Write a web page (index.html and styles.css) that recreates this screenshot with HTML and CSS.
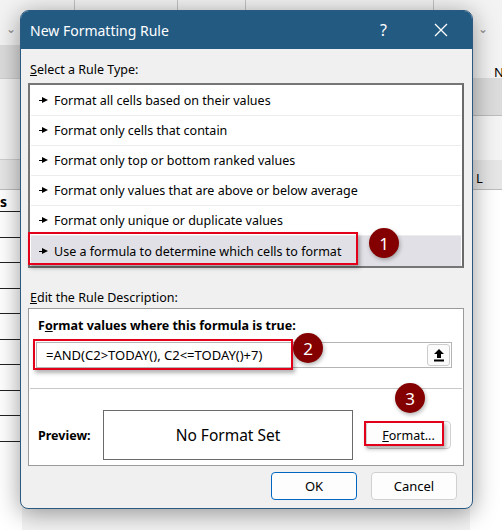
FILE: index.html
```html
<!DOCTYPE html>
<html lang="en">
	<head>
		<meta charset="UTF-8" />
		<title>New Formatting Rule</title>
		<link rel="stylesheet" href="styles.css">
	</head>

	<body>
		<div class="sheet">
			<div class="strip strip-left">
				<div class="band b-top"><span class="chev">&#8964;</span></div>
				<div class="band b-gray"></div>
				<div class="band b-light"></div>
				<div class="band b-head"></div>
				<div class="band b-title">s</div>
				<div class="cell"></div>
				<div class="cell"></div>
				<div class="cell"></div>
				<div class="cell"></div>
				<div class="cell"></div>
				<div class="cell"></div>
				<div class="cell"></div>
				<div class="cell"></div>
				<div class="cell"></div>
			</div>
			<div class="strip strip-mid">
				<div class="ribbon">
					<span class="grp g1"></span>
					<span class="grp g2"></span>
					<span class="grp g3"></span>
					<span class="grp g4"></span>
				</div>
			</div>
			<div class="strip strip-right">
				<div class="band b-top"><span class="chev">&#8964;</span></div>
				<div class="band b-name">N</div>
				<div class="band b-gray2"></div>
				<div class="band b-light2"></div>
				<div class="band b-head">L</div>
			</div>
		</div>

		<div class="dialog">
			<div class="titlebar">
				<span class="title">New Formatting Rule</span>
				<span class="tb-help">?</span>
				<span class="tb-close">
					<svg width="14" height="14" viewBox="0 0 14 14"><path d="M1 1L13 13M13 1L1 13" stroke="#fff" stroke-width="1.3" fill="none"/></svg>
				</span>
			</div>

			<div class="body">
				<div class="label"><u>S</u>elect a Rule Type:</div>
				<div class="list">
					<div class="item"><i class="arr"></i>Format all cells based on their values</div>
					<div class="item"><i class="arr"></i>Format only cells that contain</div>
					<div class="item"><i class="arr"></i>Format only top or bottom ranked values</div>
					<div class="item"><i class="arr"></i>Format only values that are above or below average</div>
					<div class="item"><i class="arr"></i>Format only unique or duplicate values</div>
					<div class="item selected"><i class="arr"></i>Use a formula to determine which cells to format</div>
				</div>

				<div class="label label2"><u>E</u>dit the Rule Description:</div>
				<div class="desc">
					<div class="desc-head">F<u>o</u>rmat values where this formula is true:</div>
					<div class="formula">
						<span class="formula-txt">=AND(C2&gt;TODAY(), C2&lt;=TODAY()+7)</span>
						<span class="pick">
							<svg width="12" height="14" viewBox="0 0 12 14"><path d="M6 1L11 6H8V10H4V6H1Z" fill="#000"/><rect x="1" y="11.5" width="10" height="2" fill="#000"/></svg>
						</span>
					</div>
					<div class="sep"></div>
					<div class="preview-row">
						<span class="preview-lbl">Preview:</span>
						<div class="preview">No Format Set</div>
						<button class="btn fmt"><u>F</u>ormat...</button>
					</div>
				</div>

				<div class="actions">
					<button class="btn ok">OK</button>
					<button class="btn cancel">Cancel</button>
				</div>
			</div>

			<div class="mark mark1"></div>
			<div class="badge badge1">1</div>
			<div class="mark mark2"></div>
			<div class="badge badge2">2</div>
			<div class="mark mark3"></div>
			<div class="badge badge3">3</div>
		</div>
	</body>
</html>
```

FILE: styles.css
```css
* {
	box-sizing: border-box;
	margin: 0;
	padding: 0;
}

body {
	width: 502px;
	height: 530px;
	overflow: hidden;
	position: relative;
	font-family: "Noto Sans", "Open Sans", sans-serif;
	font-size: 12px;
	color: #000;
	background: #fff;
}

/* spreadsheet behind the dialog */
.sheet {
	display: flex;
	height: 530px;
}

.strip {
	display: flex;
	flex-direction: column;
}

.strip-left {
	width: 22px;
}

.strip-mid {
	flex: 1;
	background: #f3f3f3;
}

.strip-right {
	width: 32px;
}

.ribbon {
	display: flex;
	height: 10px;
}

.grp {
	height: 10px;
	border-right: 1px solid #c4c4c4;
}

.g1 {
	width: 53px;
}

.g2 {
	width: 103px;
}

.g3 {
	width: 68px;
}

.g4 {
	width: 188px;
}

.band {
	position: relative;
}

.b-top {
	height: 45px;
	background: #f3f3f3;
}

.chev {
	display: block;
	color: #8a8a8a;
	font-size: 12px;
	margin-top: 20px;
	padding-left: 6px;
}

.strip-right .chev {
	padding-left: 8px;
}

.b-gray {
	height: 33px;
	background: #dcdcdc;
}

.b-light {
	height: 82px;
	background: #f4f4f4;
	border-top: 1px solid #cfcfcf;
	border-bottom: 1px solid #cfcfcf;
}

.b-head {
	height: 30px;
	background: #e6e6e6;
	border-bottom: 1px solid #bdbdbd;
	font-size: 13px;
	padding: 9px 0 0 6px;
}

.b-title {
	height: 22px;
	font-weight: bold;
	font-size: 14px;
	line-height: 24px;
	border-bottom: 1px solid #222;
	background: #fff;
}

.cell {
	height: 25.5px;
	border-bottom: 1px solid #222;
	background: #fff;
}

.b-name {
	height: 33px;
	background: #f3f3f3;
	font-size: 13px;
	line-height: 16px;
	padding: 19px 0 0 24px;
}

.b-gray2 {
	height: 38px;
	background: #dcdcdc;
	border-bottom: 1px solid #bdbdbd;
}

.b-light2 {
	height: 44px;
	background: #f4f4f4;
}

/* dialog */
.dialog {
	position: absolute;
	left: 20px;
	top: 10px;
	width: 453px;
	height: 499px;
	background: #f0f0f0;
	border: 1px solid #2a5a82;
	border-radius: 9px 9px 8px 8px;
	box-shadow: 0 4px 24px rgba(0, 0, 0, 0.4);
	overflow: hidden;
}

.titlebar {
	height: 38px;
	background: #235a82;
	color: #fff;
	display: flex;
	align-items: center;
	padding-left: 9px;
}

.title {
	flex: 1;
	font-size: 14px;
}

.tb-help {
	font-size: 16px;
	width: 20px;
	margin-right: 34px;
}

.tb-close {
	width: 16px;
	margin-right: 22px;
	display: flex;
}

.body {
	padding: 0 8px 0 7px;
}

.label {
	font-size: 12.5px;
	margin-top: 12px;
	height: 22px;
	padding-left: 2px;
}

.label2 {
	margin-top: 21px;
	height: 19px;
}

.list {
	height: 185px;
	background: #fff;
	border: 2px solid #767676;
	border-right-color: #6a6a6a;
	padding: 1px 1px 0 1px;
}

.item {
	height: 30px;
	display: flex;
	align-items: center;
	padding-left: 8px;
	font-size: 12.5px;
	border-bottom: 1px solid #ececec;
}

.item.selected {
	background: #e1e0e6;
	border-bottom: none;
}

.arr {
	display: inline-block;
	width: 9px;
	height: 7px;
	margin-right: 6px;
	background: linear-gradient(#000, #000) 0 3px / 4px 1px no-repeat;
	position: relative;
}

.arr::after {
	content: "";
	position: absolute;
	left: 3px;
	top: 0;
	border-left: 6px solid #000;
	border-top: 3.5px solid transparent;
	border-bottom: 3.5px solid transparent;
}

.desc {
	height: 158px;
	background: #fff;
	border: 1px solid #9a9a9a;
	padding: 0 11px 0 1px;
}

.desc-head {
	font-weight: bold;
	font-size: 12.5px;
	padding: 8px 0 0 8px;
	height: 33px;
}

.formula {
	height: 26px;
	margin-left: 6px;
	border: 1px solid #b4b4b4;
	display: flex;
	align-items: center;
	padding: 0 1px 0 9px;
}

.formula-txt {
	flex: 1;
	font-size: 13px;
}

.pick {
	width: 23px;
	height: 22px;
	border: 1px solid #cdcdcd;
	border-radius: 3px;
	background: #fbfbfb;
	display: flex;
	align-items: center;
	justify-content: center;
}

.sep {
	height: 1px;
	background: #c8c8c8;
	margin: 20px -10px 0 0;
}

.preview-row {
	display: flex;
	align-items: center;
	margin-top: 21px;
}

.preview-lbl {
	font-weight: bold;
	font-size: 12.5px;
	width: 73px;
	padding-left: 8px;
}

.preview {
	width: 250px;
	height: 50px;
	border: 1px solid #6a6a6a;
	display: flex;
	align-items: center;
	justify-content: center;
	font-size: 15.5px;
}

.btn {
	font-family: inherit;
	font-size: 12.5px;
	color: #000;
	background: #fdfdfd;
	border: 1px solid #d0d0d0;
	border-radius: 4px;
}

.fmt {
	width: 85px;
	height: 28px;
	margin-left: 13px;
}

.actions {
	display: flex;
	justify-content: flex-end;
	gap: 14px;
	margin-top: 6px;
	padding-right: 7px;
}

.ok,
.cancel {
	width: 86px;
	height: 28px;
	font-size: 13px;
}

.ok {
	border-color: #0067c0;
}

/* annotations */
.mark {
	position: absolute;
	border: 2px solid #e3001b;
	box-shadow: 2px 3px 4px rgba(0, 0, 0, 0.3);
}

.mark1 {
	left: 7px;
	top: 221px;
	width: 330px;
	height: 33px;
}

.mark2 {
	left: 12px;
	top: 328px;
	width: 260px;
	height: 31px;
}

.mark3 {
	left: 343px;
	top: 410px;
	width: 80px;
	height: 25px;
}

.badge {
	position: absolute;
	width: 30px;
	height: 30px;
	border-radius: 50%;
	background: #840000;
	color: #fff;
	font-size: 17px;
	display: flex;
	align-items: center;
	justify-content: center;
	box-shadow: 1px 2px 4px rgba(0, 0, 0, 0.3);
}

.badge1 {
	left: 348px;
	top: 217px;
}

.badge2 {
	left: 272px;
	top: 322px;
}

.badge3 {
	left: 374px;
	top: 372px;
}
```
